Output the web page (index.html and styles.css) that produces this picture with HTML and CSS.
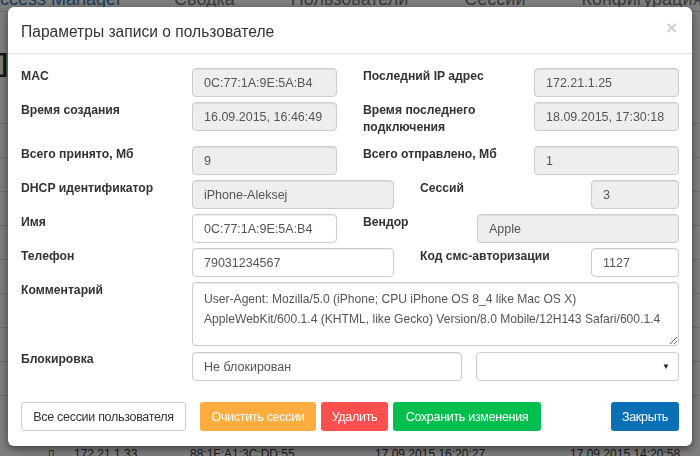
FILE: index.html
```html
<!DOCTYPE html>
<html lang="en">
<head>
    <meta charset="UTF-8">
    <meta name="viewport" content="width=device-width, initial-scale=1.0">
    <title>Параметры записи о пользователе</title>
    <link rel="stylesheet" href="styles.css">
</head>
<body>

    <div class="app">
        <nav class="navbar">
            <span class="brand">Access Manager</span>
            <span class="nav-link">Сводка</span>
            <span class="nav-link">Пользователи</span>
            <span class="nav-link">Сессии</span>
            <span class="nav-link">Конфигурация&#9662;</span>
            <span class="nav-link">Логи</span>
            <span class="nav-link">Отчеты&#9662;</span>
        </nav>
        <h1 class="page-title">Пользователь [iPhone-Aleksej]</h1>
        <div class="table-lines">
            <div class="line"></div><div class="line"></div><div class="line"></div>
            <div class="line"></div><div class="line"></div><div class="line"></div>
            <div class="line"></div><div class="line"></div><div class="line"></div>
        </div>
        <div class="table-row">
            <span class="cell c1">&#9647;</span>
            <span class="cell c2">172.21.1.33</span>
            <span class="cell c3">88:1F:A1:3C:DD:55</span>
            <span class="cell c4">17.09.2015 16:20:27</span>
            <span class="cell c5">17.09.2015 14:20:58</span>
        </div>
    </div>

    <div class="backdrop"></div>

    <div class="modal">
        <div class="modal-header">
            <h4 class="modal-title">Параметры записи о пользователе</h4>
            <span class="close">&times;</span>
        </div>

        <div class="modal-body">
            <div class="form-grid">
                <label class="span-3">MAC</label>
                <div class="span-3"><input class="form-control" type="text" value="0C:77:1A:9E:5A:B4" disabled></div>
                <label class="span-3">Последний IP адрес</label>
                <div class="span-3"><input class="form-control" type="text" value="172.21.1.25" disabled></div>

                <label class="span-3">Время создания</label>
                <div class="span-3"><input class="form-control" type="text" value="16.09.2015, 16:46:49" disabled></div>
                <label class="span-3">Время последнего подключения</label>
                <div class="span-3"><input class="form-control" type="text" value="18.09.2015, 17:30:18" disabled></div>

                <label class="span-3">Всего принято, Мб</label>
                <div class="span-3"><input class="form-control" type="text" value="9" disabled></div>
                <label class="span-3">Всего отправлено, Мб</label>
                <div class="span-3"><input class="form-control" type="text" value="1" disabled></div>

                <label class="span-3">DHCP идентификатор</label>
                <div class="span-4"><input class="form-control" type="text" value="iPhone-Aleksej" disabled></div>
                <label class="span-3">Сессий</label>
                <div class="span-2"><input class="form-control" type="text" value="3" disabled></div>

                <label class="span-3">Имя</label>
                <div class="span-3"><input class="form-control" type="text" value="0C:77:1A:9E:5A:B4"></div>
                <label class="span-2">Вендор</label>
                <div class="span-4"><input class="form-control" type="text" value="Apple" disabled></div>

                <label class="span-3">Телефон</label>
                <div class="span-4"><input class="form-control" type="text" value="79031234567"></div>
                <label class="span-3">Код смс-авторизации</label>
                <div class="span-2"><input class="form-control" type="text" value="1127"></div>

                <label class="span-3">Комментарий</label>
                <div class="span-9"><textarea class="form-control comment">User-Agent: Mozilla/5.0 (iPhone; CPU iPhone OS 8_4 like Mac OS X) AppleWebKit/600.1.4 (KHTML, like Gecko) Version/8.0 Mobile/12H143 Safari/600.1.4</textarea></div>

                <label class="span-3">Блокировка</label>
                <div class="span-9 block-group">
                    <input class="form-control block-input" type="text" value="Не блокирован">
                    <div class="select-box">
                        <span class="caret">&#9660;</span>
                    </div>
                </div>
            </div>
        </div>

        <div class="modal-footer">
            <button class="btn btn-default">Все сессии пользователя</button>
            <button class="btn btn-warning">Очистить сессии</button>
            <button class="btn btn-danger">Удалить</button>
            <button class="btn btn-success">Сохранить изменения</button>
            <button class="btn btn-primary btn-close">Закрыть</button>
        </div>
    </div>

</body>
</html>
```

FILE: styles.css
```css
body {
    margin: 0;
    font-family: "Liberation Sans", Arial, sans-serif;
    background-color: #ffffff;
    color: #333;
    overflow: hidden;
    height: 456px;
}

/* page behind the modal */
.app {
    display: flex;
    flex-direction: column;
    height: 462px;
    overflow: hidden;
}

.navbar {
    display: flex;
    gap: 56px;
    margin-top: -13px;
    height: 24px;
    line-height: 24px;
    font-size: 18px;
    color: #777;
    border-bottom: 1px solid #ddd;
    white-space: nowrap;
}

.brand {
    color: #337ab7;
    margin-left: -12px;
    margin-right: -4px;
}

.page-title {
    margin: 36px 0 0 -442px;
    width: 450px;
    flex: none;
    text-align: right;
    font-size: 26px;
    line-height: 30px;
    font-weight: bold;
    white-space: nowrap;
}

.table-lines {
    margin-top: 12px;
}

.table-lines .line {
    height: 33px;
    border-bottom: 1px solid #ddd;
}

.table-row {
    display: flex;
    margin-top: auto;
    font-size: 12px;
    line-height: 16px;
    white-space: nowrap;
}

.c1 { margin-left: 48px; width: 26px; }
.c2 { width: 116px; }
.c3 { width: 185px; }
.c4 { width: 195px; }
.c5 { width: 120px; }

.backdrop {
    position: fixed;
    inset: 0;
    background-color: rgba(0, 0, 0, 0.5);
}

/* modal */
.modal {
    position: absolute;
    top: 7px;
    left: 8px;
    width: 684px;
    background-color: #ffffff;
    border-radius: 6px;
    box-shadow: 0 3px 9px rgba(0, 0, 0, 0.5);
}

.modal-header {
    display: flex;
    justify-content: space-between;
    align-items: center;
    height: 47px;
    padding: 0 13px;
    border-bottom: 1px solid #e5e5e5;
    box-sizing: border-box;
}

.modal-title {
    margin: 3px 0 0;
    font-size: 15.6px;
    font-weight: normal;
    color: #333;
}

.close {
    font-size: 19px;
    font-weight: bold;
    color: #d0d0d0;
    margin-right: 2px;
    margin-top: -4px;
}

.modal-body {
    padding: 14px 13px 0;
}

.form-grid {
    display: grid;
    grid-template-columns: repeat(12, 31px);
    column-gap: 26px;
    row-gap: 5px;
}

.span-2 { grid-column: span 2; }
.span-3 { grid-column: span 3; }
.span-4 { grid-column: span 4; }
.span-9 { grid-column: span 9; }

label {
    font-size: 12.2px;
    font-weight: bold;
    line-height: 17px;
    color: #333;
    margin-bottom: 5px;
}

.form-control {
    display: block;
    width: 100%;
    height: 29px;
    padding: 0 11px;
    font-family: "Liberation Sans", Arial, sans-serif;
    font-size: 12.5px;
    color: #555;
    background-color: #fff;
    border: 1px solid #ccc;
    border-radius: 4px;
    box-sizing: border-box;
    box-shadow: inset 0 1px 1px rgba(0, 0, 0, 0.075);
}

.form-control:disabled {
    background-color: #eee;
    color: #555;
    -webkit-text-fill-color: #555;
    opacity: 1;
}

textarea.comment {
    height: 64px;
    padding: 6px 10px 6px 11px;
    font-size: 12.1px;
    line-height: 20px;
    resize: vertical;
    overflow: hidden;
}

.block-group {
    display: flex;
    gap: 14px;
    margin-top: 1px;
}

.block-input {
    width: 270px;
    flex: none;
}

.select-box {
    flex: 1;
    height: 29px;
    border: 1px solid #ccc;
    border-radius: 4px;
    box-sizing: border-box;
    display: flex;
    justify-content: flex-end;
    align-items: center;
    padding-right: 8px;
}

.caret {
    font-size: 8px;
    color: #222;
}

.modal-footer {
    display: flex;
    align-items: center;
    gap: 5px;
    padding: 21px 13px 15px;
}

.btn {
    height: 29px;
    padding: 0;
    font-family: "Liberation Sans", Arial, sans-serif;
    font-size: 12.5px;
    letter-spacing: -0.3px;
    white-space: nowrap;
    color: #fff;
    border: 1px solid transparent;
    border-radius: 3px;
    cursor: pointer;
}

.btn-default {
    color: #333;
    background-color: #fff;
    border-color: #ccc;
    width: 165px;
    margin-right: 9px;
}

.btn-warning {
    background-color: #ffad3f;
    width: 116px;
}

.btn-danger {
    background-color: #ff4f4f;
    width: 67px;
}

.btn-success {
    background-color: #00bf4f;
    width: 148px;
}

.btn-primary {
    background-color: #0a6fb5;
    width: 68px;
}

.btn-close {
    margin-left: auto;
}
```
